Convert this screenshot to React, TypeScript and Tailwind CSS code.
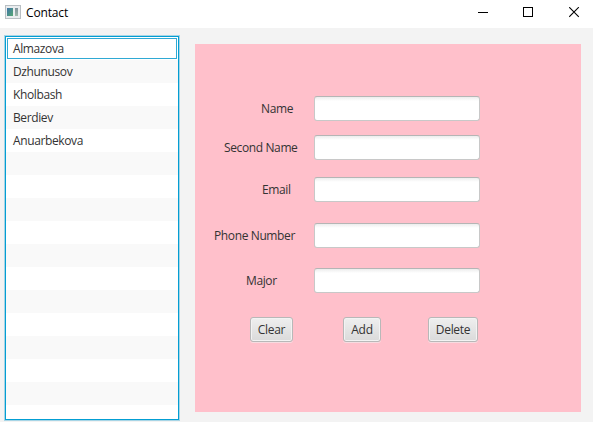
import React from "react";

const contacts = ["Almazova", "Dzhunusov", "Kholbash", "Berdiev", "Anuarbekova"];
const ROW_COUNT = 17;

const fields = [
  { label: "Name", row: "", indent: "pl-[66px]" },
  { label: "Second Name", row: "mt-[14px]", indent: "pl-[29px]" },
  { label: "Email", row: "mt-[17px]", indent: "pl-[67px]" },
  { label: "Phone Number", row: "mt-[21px]", indent: "pl-[19px]" },
  { label: "Major", row: "mt-[20px]", indent: "pl-[51px]" },
];

const buttons = [
  { label: "Clear", size: "ml-[55px] w-[43px]" },
  { label: "Add", size: "ml-[50px] w-[38px]" },
  { label: "Delete", size: "ml-[47px] w-[50px]" },
];

function AppIcon() {
  return (
    <svg width="16" height="14" viewBox="0 0 16 14" shapeRendering="crispEdges">
      <defs>
        <linearGradient id="pane" x1="0" y1="0" x2="1" y2="1">
          <stop offset="0" stopColor="#3f74a8" />
          <stop offset="1" stopColor="#55a873" />
        </linearGradient>
        <linearGradient id="side" x1="0" y1="0" x2="0" y2="1">
          <stop offset="0" stopColor="#7f929c" />
          <stop offset="1" stopColor="#9fb8ab" />
        </linearGradient>
      </defs>
      <rect width="16" height="14" fill="#b9bfc3" />
      <rect x="1" y="1" width="14" height="12" fill="#e9ecee" />
      <rect x="2" y="3" width="6" height="8" fill="url(#pane)" />
      <rect x="10" y="3" width="3" height="8" fill="url(#side)" />
    </svg>
  );
}

function TitleBar() {
  return (
    <header className="flex h-[28px] items-start bg-white text-black">
      <div className="ml-[5px] mt-[5px]"><AppIcon /></div>
      <span className="ml-[5px] mt-[4px] text-[12px] leading-[17px] tracking-[-0.15px]">Contact</span>
      <div className="ml-auto mr-[13px] mt-[7px] flex">
        <svg width="11" height="11" shapeRendering="crispEdges"><path d="M0 5.5H10" stroke="#000" /></svg>
        <svg className="ml-[34px]" width="10" height="11" shapeRendering="crispEdges"><path d="M.5 .5H9.5V9.5H.5Z" fill="none" stroke="#000" /></svg>
        <svg className="ml-[36px]" width="11" height="11"><path d="M.2 .2L9.8 9.8M9.8 .2L.2 9.8" stroke="#000" strokeWidth="1.1" /></svg>
      </div>
    </header>
  );
}

function ContactList() {
  return (
    <ul className="ml-[5px] mt-[8px] h-[384px] w-[174px] shrink-0 overflow-hidden border border-[#039ed3] bg-white shadow-[0_0_0_1px_#a7d5e6]">
      {Array.from({ length: ROW_COUNT }, (_, i) => (
        <li key={i} className={`h-[23px] p-px ${i % 2 ? "bg-[#f9f9f9]" : "bg-white"}`}>
          <div className={`h-[21px] border pl-[5px] leading-[20px] ${i === 0 ? "border-[#2fa9d4]" : "border-transparent"}`}>
            {contacts[i]}
          </div>
        </li>
      ))}
    </ul>
  );
}

export default function App() {
  return (
    <div className="flex h-[422px] w-[593px] flex-col overflow-hidden bg-[#f3f3f3] font-['Open_Sans','Noto_Sans',sans-serif] text-[12px] tracking-[-0.38px] text-[#333]">
      <TitleBar />
      <main className="flex min-h-0 flex-1 items-start">
        <ContactList />
        <section className="ml-[16px] mt-[16px] h-[368px] w-[386px] bg-[#ffc0cb] pt-[52px]">
          {fields.map((f) => (
            <div key={f.label} className={`flex h-[25px] ${f.row}`}>
              <label className={`w-[119px] whitespace-nowrap leading-[25px] ${f.indent}`}>{f.label}</label>
              <input
                aria-label={f.label}
                className="h-[25px] w-[166px] rounded-[3px] border border-[#c8c8c8] border-t-[#b5b5b5] bg-[linear-gradient(#ededed,#ffffff_4px)] px-[6px] outline-none"
              />
            </div>
          ))}
          <div className="mt-[24px] flex">
            {buttons.map((b) => (
              <button
                key={b.label}
                className={`h-[25px] rounded-[3px] border border-[#b8b8b8] bg-[linear-gradient(#efefef,#dadada)] pt-px text-center leading-[22px] tracking-[-0.32px] shadow-[inset_0_0_0_1px_#f3f3f3,0_1px_0_#f7dce1] ${b.size}`}
              >
                {b.label}
              </button>
            ))}
          </div>
        </section>
      </main>
    </div>
  );
}
